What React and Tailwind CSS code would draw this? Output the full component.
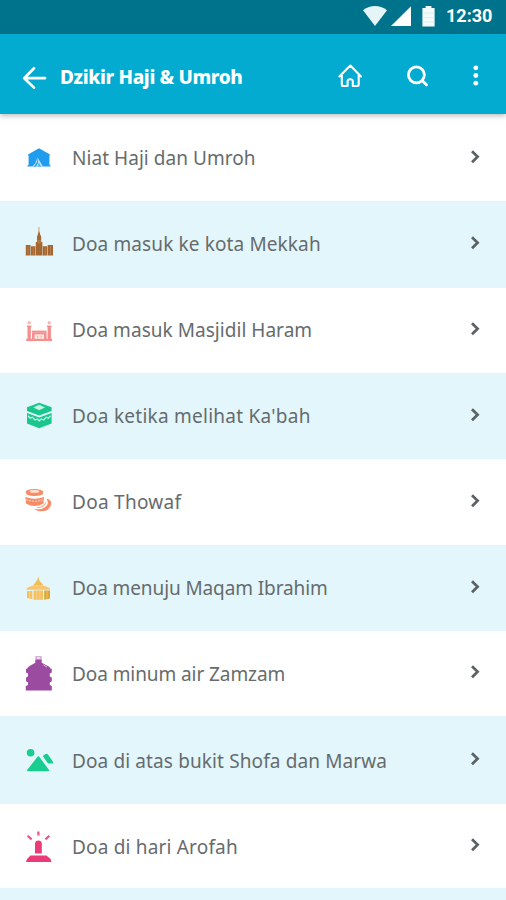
const TentIcon = () => (
  <svg className="h-full w-[34px]" viewBox="22 114 34 87">
    <path d="M39 148.2 50 154.4 49.4 156.2V164.6L51 166.6H27L28.6 164.6V156.2L28 154.4Z" fill="#209cee" />
    <path d="M37.5 157.5 43 166.6H32.2L35.2 163.4Z" fill="#bfe2fa" />
    <path d="M37 156 38.2 163 36 166.6H34L37 162Z" fill="#2aa3ef" />
    <path d="M39 162.6 41 166.6H37.6Z" fill="#4eb3f2" />
  </svg>
);

const CityIcon = () => (
  <svg className="h-full w-[34px]" viewBox="22 201 34 87">
    <path d="M38.9 227V236" stroke="#d3bfae" strokeWidth="1.6" />
    <path d="M39 231 41.2 237V242H42.4V255.5H35.8V242H37V237Z" fill="#a5662f" />
    <path d="M25.8 245H30.5V255.5H25.8ZM31 246.2H35.4V255.5H31ZM42.8 246.2H47.2V255.5H42.8ZM47.7 245H53V255.5H47.7Z" fill="#a5662f" />
    <path d="M37.2 240H41V243.5H37.2Z" fill="#b07a49" />
    <path d="M28 246V255M33.2 247V255M45.2 247V255M50.4 246V255" stroke="#c69a72" strokeWidth=".5" />
  </svg>
);

const MosqueIcon = () => (
  <svg className="h-full w-[34px]" viewBox="22 288 34 85">
    <g fill="#f78d8d">
      <circle cx="29.2" cy="322.8" r="1.7" fill="#fbb5b5" />
      <circle cx="49.2" cy="322.8" r="1.7" fill="#fbb5b5" />
      <path d="M27 325.4H31.4V327H30.8V339.4H27.5V327H27ZM47 325.4H51.4V327H50.9V339.4H47.6V327H47Z" />
      <path d="M26.2 338.8H52V341H26.2Z" />
      <path d="M31.8 330.6H46.6V332.8H31.8Z" />
      <path d="M32 332.8H34.6V339H32ZM44 332.8H46.6V339H44ZM34 332.8H44.6V334.4H34Z" />
    </g>
    <path d="M35.4 334.8H43.4V338.8H35.4Z" fill="#fde2d8" />
    <path d="M37.6 338.8V335.5M41.2 338.8V335.5" stroke="#f9a8a5" strokeWidth=".8" />
  </svg>
);

const KaabaIcon = () => (
  <svg className="h-full w-[34px]" viewBox="22 373 34 86">
    <path d="M39.2 402.8 51.6 407.2V411L39.2 415.6 27 411V407.2Z" fill="#19c78d" />
    <path d="M39.2 404.8 45 407.5 39.2 410.2 33.4 407.5Z" fill="#c9f3e7" />
    <path d="M27 413 39.2 417.4 51.6 413V423.4L39.2 428.2 27 423.4Z" fill="#19c78d" />
    <path d="M28 415.8 30.2 418.2 32.5 417.2 35 420 37.3 419 39.2 420.8 41.4 419 43.8 420 46.2 417.2 48.4 418.2 50.6 415.8" fill="none" stroke="#c5f1e4" strokeWidth="1.3" />
  </svg>
);

const TawafIcon = () => (
  <svg className="h-full w-[34px]" viewBox="22 459 34 86">
    <g fill="#f68d67">
      <path d="M25.6 491.8Q27 489 34.2 489T43.4 491.8L42.6 494.4Q34.5 497.4 26.5 494.4Z" />
      <path d="M25.4 497Q34.5 500.4 44 497L43.5 503.4Q34.5 508.4 26 503.4Z" />
      <path d="M46.4 498.8Q51.4 499.4 51.2 503.6C50.8 510.5 42 513.8 33.8 509Q44.5 510.6 47.5 504.3Q48.5 501.8 46.4 498.8Z" />
    </g>
    <ellipse cx="34.5" cy="491.4" rx="4.8" ry="1.3" fill="#fde1d4" />
    <path d="M26 499.6Q34.5 502.8 43.4 499.6" fill="none" stroke="#fddaca" strokeWidth="1" strokeDasharray="2 1" />
    <path d="M37 507.6Q43.5 507.6 46 502.5" fill="none" stroke="#f9b094" strokeWidth="1.2" />
  </svg>
);

const MaqamIcon = () => (
  <svg className="h-full w-[34px]" viewBox="22 545 34 86">
    <path d="M38.2 576.5 39.4 580.6 43.6 585.5H33L37 580.6Z" fill="#f2bc56" />
    <path d="M26.6 588.3Q31 585.3 38 585.3T50 588.3V589.8H26.6Z" fill="#f5c66d" />
    <path d="M27 591H32.4V599.2L27 598ZM33.6 590.5H43V599.8H33.6Z" fill="#f5c062" />
    <path d="M44.2 590.5H50V598.6L44.2 599.8Z" fill="#dda532" />
    <path d="M29.6 591V599M47 591V599M36.7 591V599.5M39.9 591V599.5" stroke="#fae0ab" strokeWidth=".5" />
  </svg>
);

const BottleIcon = () => (
  <svg className="h-full w-[34px]" viewBox="22 631 34 85">
    <path d="M35.3 656H41.7V659.6H35.3Z" fill="#d3afd6" />
    <path d="M37 657.2H40V658.6H37Z" fill="#f5ebf6" />
    <path d="M35.3 659.6H41.7V662.8L48.4 666.2Q50.4 667.4 50.6 668.8H51.8V672.4L49.8 673.6V676.6L51.8 677.6V681.2L49.8 682.4V685L51.8 686V690.4H25.8V686L28 685V682.4L26 681.2V677.6L28 676.6V673.6L26 672.4V668.8H27.2Q27.4 667.4 29.2 666.2L35.3 662.8Z" fill="#9b4ca1" />
    <path d="M43.4 664.8 47 667" stroke="#d8b4dc" strokeWidth="1" />
  </svg>
);

const HillsIcon = () => (
  <svg className="h-full w-[34px]" viewBox="22 716 34 88">
    <g fill="#19cc90" stroke="#19cc90" strokeLinejoin="round">
      <circle cx="30.6" cy="752.8" r="3.8" stroke="none" />
      <path d="M38.4 757 48.4 770.4H27.8Z" strokeWidth="1.6" />
      <path d="M44 756.2 46 754.8Q46.8 754.4 47.4 755.2L52.4 762.6H48.6Z" strokeWidth="1.8" />
    </g>
  </svg>
);

const BeaconIcon = () => (
  <svg className="h-full w-[34px]" viewBox="22 804 34 84">
    <path d="M35 853.4V843.6Q35.2 840.4 38.4 840.4T41.8 843.6V853.4Z" fill="#ea3a78" />
    <path d="M30.4 855.4H46.4L48.2 857 50.6 859 51.4 862H26L27 859 29 857Z" fill="#ea3a78" />
    <path d="M38.4 831.5V835.5M27.6 835.8 31.6 839.4M49.4 835.8 45.4 839.4" stroke="#ee5287" strokeWidth="2.2" />
  </svg>
);

const rows = [
  { text: "Niat Haji dan Umroh", Icon: TentIcon, size: "h-[87px] bg-white", type: "tracking-[0.05px] pt-0.5", arrow: "mb-px" },
  { text: "Doa masuk ke kota Mekkah", Icon: CityIcon, size: "h-[87px] bg-[#e2f6fb]", type: "tracking-[0.12px]", arrow: "mb-[3px]" },
  { text: "Doa masuk Masjidil Haram", Icon: MosqueIcon, size: "h-[85px] bg-white", type: "tracking-[0.04px]", arrow: "mb-[3px]" },
  { text: "Doa ketika melihat Ka'bah", Icon: KaabaIcon, size: "h-[86px] bg-[#e2f6fb]", type: "tracking-[0.25px]", arrow: "mb-[3px]" },
  { text: "Doa Thowaf", Icon: TawafIcon, size: "h-[86px] bg-white", type: "tracking-[0.28px]", arrow: "mb-[3px]" },
  { text: "Doa menuju Maqam Ibrahim", Icon: MaqamIcon, size: "h-[86px] bg-[#e2f6fb]", type: "tracking-[-0.1px]", arrow: "mb-[3px]" },
  { text: "Doa minum air Zamzam", Icon: BottleIcon, size: "h-[85px] bg-white", type: "tracking-[-0.08px] pt-0.5", arrow: "mb-[3px]" },
  { text: "Doa di atas bukit Shofa dan Marwa", Icon: HillsIcon, size: "h-[88px] bg-[#e2f6fb]", type: "tracking-[0.12px] pt-0.5", arrow: "mb-[3px]" },
  { text: "Doa di hari Arofah", Icon: BeaconIcon, size: "h-[84px] bg-white", type: "tracking-[0.18px] pt-0.5", arrow: "mb-[3px]" },
];

export default function App() {
  return (
    <div className="flex h-[900px] w-[506px] flex-col overflow-hidden bg-white font-['Noto_Sans',sans-serif]">
      <div className="flex h-[34px] shrink-0 items-center justify-end bg-[#00738c] pr-[13px]">
        <svg className="h-full w-[84px] shrink-0" viewBox="358 0 84 34">
          <path d="M363 10.2Q375 2 387 10.2L375 26Z" fill="#e4f4f7" />
          <path d="M411 6.2V26H391Z" fill="#fff" />
          <path d="M425.6 6H431.4V8H434.6V26.5H422.4V8H425.6Z" fill="#f3fafb" />
          <path d="M422.4 13H434.6M422.4 17.5H434.6M422.4 22H434.6" stroke="#d3e8ec" strokeWidth=".7" />
        </svg>
        <span className="ml-1 w-[47px] whitespace-nowrap pb-1 font-['Roboto',sans-serif] text-[18px] font-bold text-white">12:30</span>
      </div>

      <header className="z-10 flex h-20 shrink-0 items-center bg-[#03abd0] pl-5 shadow-[0_2px_5px_rgba(0,0,0,0.25)]">
        <svg className="h-full w-[30px]" viewBox="20 34 30 80" fill="none" stroke="#fff" strokeWidth="2.7" strokeLinecap="round" strokeLinejoin="round">
          <path d="M45 78.2H24.5M34 68.2 24.2 78.2 34 87.6" />
        </svg>
        <h1 className="ml-[10px] w-[269px] whitespace-nowrap pt-1.5 text-[19px] font-extrabold tracking-[-0.36px] text-white">Dzikir Haji &amp; Umroh</h1>
        <svg className="h-full w-[170px]" viewBox="329 34 170 80" fill="none" stroke="#fff" strokeLinecap="round" strokeLinejoin="round">
          <path d="M339.4 76.5 350.3 65.5 361 76.5M341.8 75V84.5Q341.8 86 343.3 86H347.6V81.5Q347.6 79.2 350.2 79.2T352.8 81.5V86H357.2Q358.7 86 358.7 84.5V75" strokeWidth="2.1" />
          <circle cx="416.4" cy="74.8" r="8" strokeWidth="2.8" />
          <path d="M422.4 80.8 426.4 84.8" strokeWidth="3" />
          <g fill="#fff" stroke="none">
            <circle cx="475.8" cy="67.8" r="2.4" />
            <circle cx="475.8" cy="75.5" r="2.4" />
            <circle cx="475.8" cy="83.2" r="2.4" />
          </g>
        </svg>
      </header>

      <ul className="flex flex-col">
        {rows.map(({ text, Icon, size, type, arrow }) => (
          <li key={text} className={`flex shrink-0 items-center pl-[22px] pr-[25px] ${size}`}>
            <Icon />
            <span className={`ml-4 flex-1 whitespace-nowrap text-[19px] text-[#666b6d] ${type}`}>{text}</span>
            <svg className={`h-4 w-[12px] ${arrow}`} viewBox="0 0 12 16" fill="none" stroke="#5c6163" strokeWidth="2.7">
              <path d="M3 2.2 8.6 7.7 3 13.2" />
            </svg>
          </li>
        ))}
        <li className="h-3 shrink-0 bg-[#e2f6fb]" />
      </ul>
    </div>
  );
}
